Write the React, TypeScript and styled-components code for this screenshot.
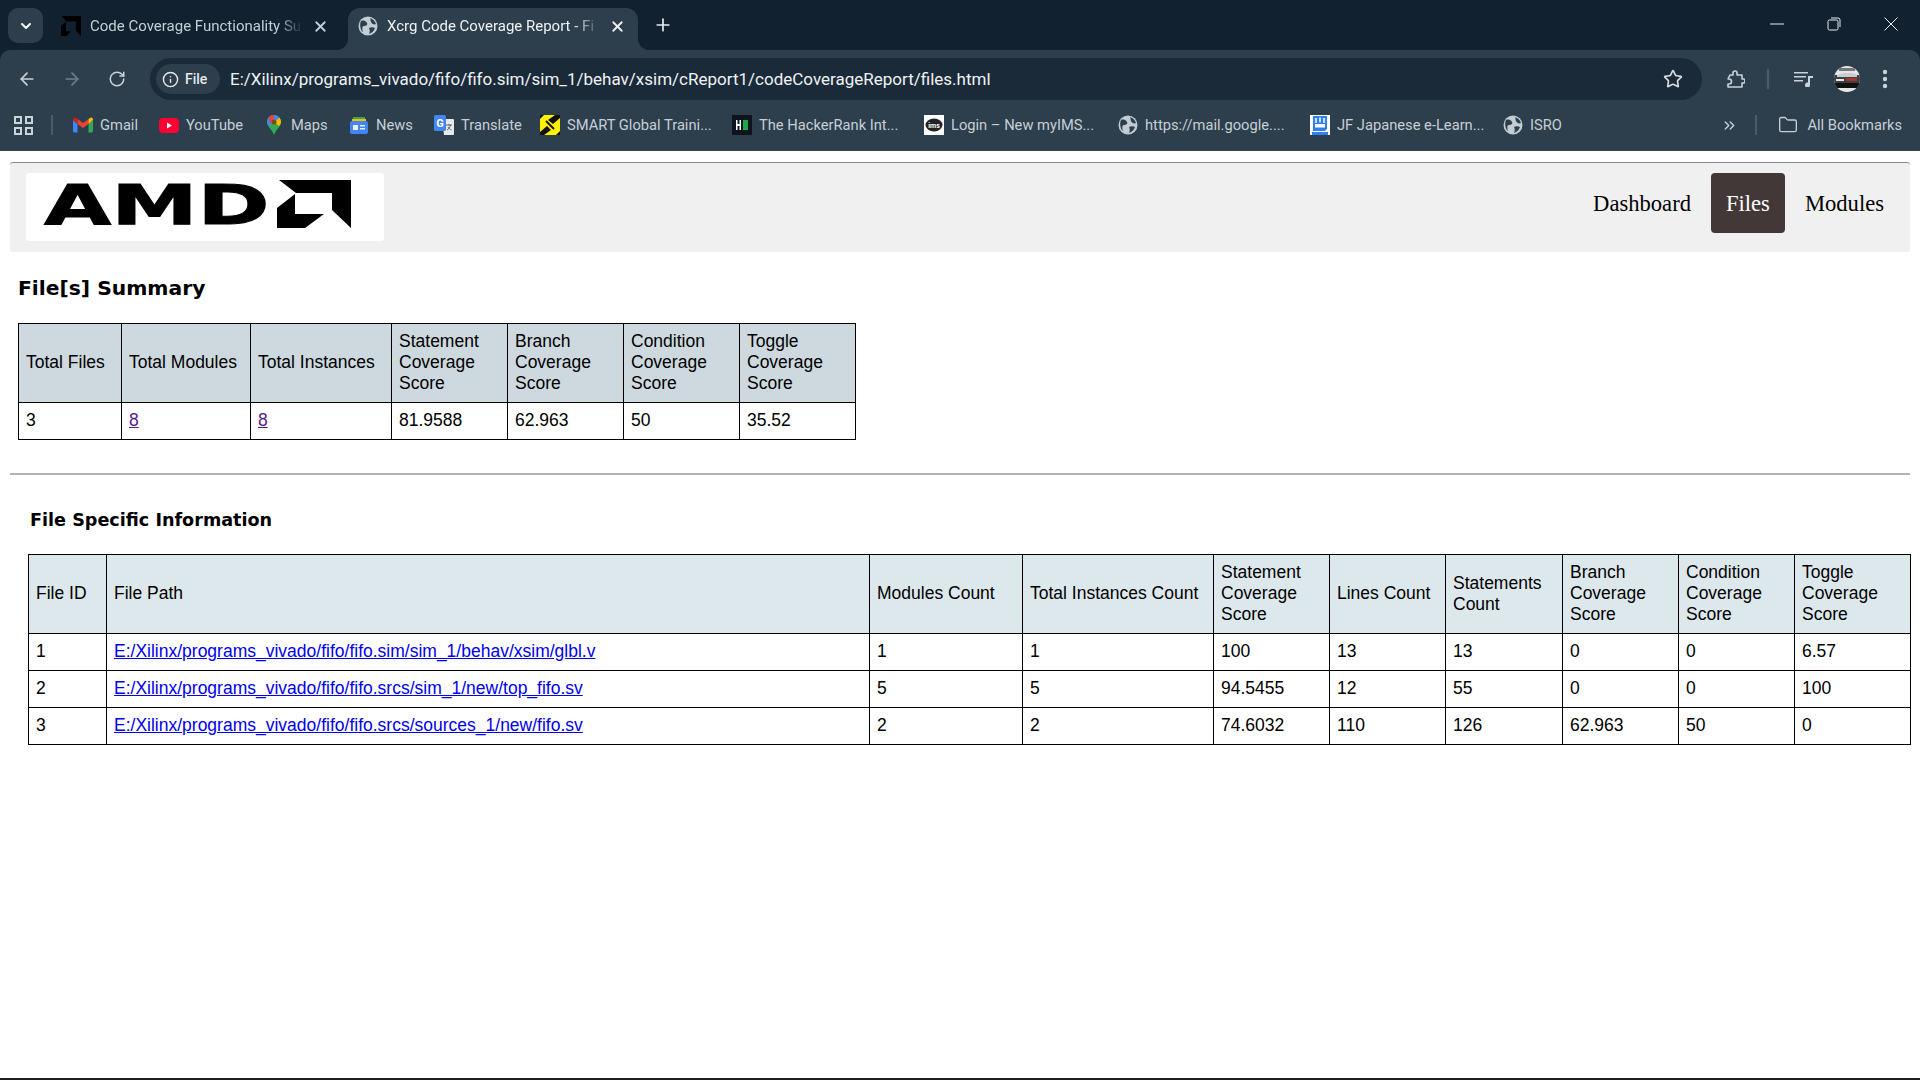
import React from "react";
import styled, { createGlobalStyle } from "styled-components";
import {
  ArrowLeft,
  ArrowRight,
  ChevronDown,
  ChevronsRight,
  Folder,
  Info,
  Plus,
  RotateCw,
  Star,
  X,
} from "lucide-react";

const GlobalStyle = createGlobalStyle`
  html, body {
    margin: 0;
    padding: 0;
    background: #fff;
  }
  * { box-sizing: border-box; }
`;

const STRIP = "#122130";
const TOOL = "#2d3e4c";

const Screen = styled.div`
  width: 1920px;
  height: 1080px;
  overflow: hidden;
  display: flex;
  flex-direction: column;
`;

/* browser chrome */
const Chrome = styled.div`
  background: ${STRIP};
  height: 151px;
  flex: none;
  font-family: Roboto, "Liberation Sans", sans-serif;
  color: #d5dde3;
  border-bottom: 1px solid #3a4650;
`;

const TabStrip = styled.div`
  height: 50px;
  display: flex;
  align-items: flex-end;
  padding-left: 8px;
`;

const TabMenu = styled.div`
  width: 35px;
  height: 35px;
  margin-bottom: 7px;
  border-radius: 10px;
  background: ${TOOL};
  display: flex;
  align-items: center;
  justify-content: center;
  color: #fff;
`;

const Tab = styled.div<{ $active?: boolean }>`
  position: relative;
  width: 290px;
  height: 42px;
  padding: 0 12px 6px 10px;
  margin-left: ${(p) => (p.$active ? "7px" : "8px")};
  display: flex;
  align-items: center;
  gap: 9px;
  border-radius: 12px 12px 0 0;
  background: ${(p) => (p.$active ? TOOL : "transparent")};
  color: ${(p) => (p.$active ? "#eef2f5" : "#c4ced6")};
  font-size: 15px;

  ${(p) =>
    p.$active &&
    `
    &::before, &::after {
      content: "";
      position: absolute;
      bottom: 0;
      width: 12px;
      height: 12px;
    }
    &::before {
      left: -12px;
      background: radial-gradient(circle at 0 0, transparent 12px, ${TOOL} 12.5px);
    }
    &::after {
      right: -12px;
      background: radial-gradient(circle at 100% 0, transparent 12px, ${TOOL} 12.5px);
    }
  `}
`;

const TabTitle = styled.span`
  flex: 1;
  white-space: nowrap;
  -webkit-mask-image: linear-gradient(to right, #000 88%, transparent 100%);
  mask-image: linear-gradient(to right, #000 88%, transparent 100%);
`;

const NewTab = styled.div`
  margin: 0 0 8px 7px;
  width: 35px;
  height: 35px;
  display: flex;
  align-items: center;
  justify-content: center;
  color: #e8edf0;
`;

const WindowControls = styled.div`
  margin: 0 1px 0 auto;
  align-self: flex-start;
  display: flex;
  color: #e8edf0;
`;

const WindowButton = styled.div`
  width: 57px;
  height: 48px;
  display: flex;
  align-items: center;
  justify-content: center;
`;

const Toolbar = styled.div`
  height: 50px;
  background: ${TOOL};
  border-radius: 10px 10px 0 0;
  display: flex;
  align-items: center;
  padding: 8px 0 0 16px;
  color: #c9d3da;
`;

const ToolIcon = styled.div<{ $dim?: boolean; $gap?: number }>`
  width: 22px;
  height: 22px;
  flex: none;
  margin-right: ${(p) => p.$gap ?? 23}px;
  display: flex;
  align-items: center;
  justify-content: center;
  color: ${(p) => (p.$dim ? "#6f7f8c" : "#c9d3da")};
`;

const Omnibox = styled.div`
  width: 1552px;
  height: 42px;
  margin-right: 22px;
  margin-left: -1px;
  border-radius: 21px;
  background: #1a2a38;
  display: flex;
  align-items: center;
  padding: 0 19px 0 6px;
`;

const FileChip = styled.div`
  width: 64px;
  height: 30px;
  border-radius: 15px;
  background: ${TOOL};
  display: flex;
  align-items: center;
  gap: 6px;
  padding-left: 6px;
  font-size: 14px;
  font-weight: 500;
  color: #e4e9ed;
`;

const UrlText = styled.div`
  flex: 1;
  margin-left: 10px;
  font-size: 17px;
  color: #eef2f5;
  white-space: nowrap;
`;

const ToolDivider = styled.div<{ $before?: number; $after?: number }>`
  width: 2px;
  height: 20px;
  margin: 0 ${(p) => p.$after ?? 0}px 0 ${(p) => p.$before ?? 0}px;
  background: #4a5b69;
  flex: none;
`;

const MediaIcon = styled.svg`
  flex: none;
  margin-left: 25px;
`;

const AvatarIcon = styled.svg`
  flex: none;
  margin: 0 22px 0 20px;
`;

const BookmarkBar = styled.div`
  height: 50px;
  background: ${TOOL};
  display: flex;
  align-items: center;
  padding-left: 14px;
  font-size: 14.7px;
  color: #c6d0d8;
`;

const AppsGrid = styled.div`
  width: 19px;
  height: 19px;
  flex: none;
  display: grid;
  grid-template-columns: 8px 8px;
  gap: 3px;
  margin-right: 18px;

  span {
    border: 2px solid #c9d3da;
  }
`;

const Bookmark = styled.div<{ $width: number }>`
  width: ${(p) => p.$width}px;
  flex: none;
  display: flex;
  align-items: center;
  gap: 7px;
  white-space: nowrap;
`;

const BookmarkIcon = styled.div`
  width: 20px;
  height: 20px;
  flex: none;
  display: flex;
  align-items: center;
  justify-content: center;
`;

const BookmarkEnd = styled.div`
  margin-left: auto;
  display: flex;
  align-items: center;
  gap: 9px;
  padding-right: 18px;
`;

/* report page */
const Page = styled.main`
  flex: 1;
  background: #fff;
  color: #000;
  padding: 11px 10px 0;
  font-family: "Liberation Sans", Arial, sans-serif;
  font-size: 17.5px;
`;

const Header = styled.header`
  height: 90px;
  background: #f0f0f0;
  border-top: 1px solid #8c8c8c;
  border-radius: 3px;
  padding: 10px 11px 0 16px;
  display: flex;
  justify-content: space-between;
  align-items: flex-start;
`;

const LogoBox = styled.div`
  width: 358px;
  height: 68px;
  background: #fff;
  border-radius: 3px;
  padding: 6px 0 0 18px;
  display: flex;
  align-items: flex-start;
  overflow: hidden;
`;

const LogoWord = styled.span`
  display: inline-block;
  width: 233px;
  margin-top: -2px;
  font-family: "DejaVu Sans", sans-serif;
  font-weight: 700;
  font-size: 56px;
  line-height: 56px;
  color: #000;
  transform: scaleX(1.55);
  transform-origin: left center;
  -webkit-text-stroke: 1px #000;
`;

const MarkSvg = styled.svg`
  flex: none;
  margin-top: 1px;
`;

const Nav = styled.nav`
  display: flex;
  gap: 5px;
  font-family: "Liberation Serif", "Times New Roman", serif;
  font-size: 22.6px;
`;

const NavItem = styled.a<{ $active?: boolean }>`
  height: 60px;
  padding: 2px 15px 0;
  display: flex;
  align-items: center;
  border-radius: 4px;
  color: ${(p) => (p.$active ? "#fff" : "#000")};
  background: ${(p) => (p.$active ? "#433838" : "transparent")};
`;

const Heading = styled.h1`
  margin: 23px 0 22px 8px;
  font-family: "DejaVu Sans", Verdana, sans-serif;
  font-weight: 700;
  font-size: 20.3px;
  line-height: 26px;
`;

const SubHeading = styled.h2`
  margin: 33px 0 22px 20px;
  font-family: "DejaVu Sans", Verdana, sans-serif;
  font-weight: 700;
  font-size: 17.6px;
  line-height: 24px;
`;

const Table = styled.table<{ $head: string; $left: number; $width: number }>`
  border-collapse: collapse;
  table-layout: fixed;
  width: ${(p) => p.$width}px;
  margin-left: ${(p) => p.$left}px;
  line-height: 21px;

  th,
  td {
    border: 1px solid #000;
    padding: 7px 7px 8px;
    font-weight: 400;
    text-align: left;
    vertical-align: middle;
  }
  th {
    background: ${(p) => p.$head};
  }
`;

const Col = styled.col<{ $width: number }>`
  width: ${(p) => p.$width}px;
`;

const Link = styled.a<{ $visited?: boolean }>`
  color: ${(p) => (p.$visited ? "#551a8b" : "#0000ee")};
  text-decoration: underline;
`;

const Rule = styled.hr`
  margin: 33px 0 0;
  border: none;
  border-top: 2px solid #b4b4b4;
`;

const BottomEdge = styled.div`
  height: 2px;
  flex: none;
  background: #1f1f1f;
`;

const Globe = ({ size = 20 }: { size?: number }) => (
  <svg width={size} height={size} viewBox="0 0 20 20">
    <circle cx="10" cy="10" r="9.5" fill="#c3ccd3" />
    <path d="M3 5c3-1 5 0 6 2s-1 3-3 3-2 3-1 6C3 15 1 9 3 5z" fill="#2d3e4c" />
    <path d="M12 2c3 1 5 3 6 6-2 1-4 0-5-2s0-3-1-4zM11 12c2-1 4-1 6 0-1 3-3 5-6 6 1-2 1-4 0-6z" fill="#2d3e4c" />
  </svg>
);

const GmailIcon = () => (
  <svg width="20" height="16" viewBox="0 0 20 16">
    <path d="M0 3v11a1.5 1.5 0 0 0 1.5 1.5H4.500V7z" fill="#4285f4" />
    <path d="M15.500 7v8.500h3A1.500 1.500 0 0 0 20 14V3z" fill="#34a853" />
    <path d="M0 3l4.500 4V2L2.500.700C1.300 0 0 1 0 3z" fill="#c5221f" />
    <path d="M4.500 2v5L10 11l5.500-4V2L10 6z" fill="#ea4335" />
    <path d="M15.500 2v5L20 3c0-2-1.300-3-2.500-2.300z" fill="#fbbc04" />
  </svg>
);

const YouTubeIcon = () => (
  <svg width="20" height="15" viewBox="0 0 20 15">
    <rect width="20" height="15" rx="4" fill="#ff0033" />
    <path d="M8 4.500l5 3-5 3z" fill="#fff" />
  </svg>
);

const MapsIcon = () => (
  <svg width="14" height="20" viewBox="0 0 14 20">
    <path d="M7 0a7 7 0 0 1 7 7c0 5-5 7-7 13C5 14 0 12 0 7a7 7 0 0 1 7-7z" fill="#34a853" />
    <path d="M7 0a7 7 0 0 1 5.500 2.700L2 11C.8 9.500 0 8.500 0 7a7 7 0 0 1 7-7z" fill="#4285f4" />
    <path d="M1.500 2.500A7 7 0 0 1 7 0v4.500L3 8z" fill="#ea4335" />
    <path d="M12.500 2.700A7 7 0 0 1 14 7c0 1.500-.8 2.500-2 4L7 7z" fill="#fbbc04" />
    <circle cx="7" cy="7" r="2.500" fill="#7b4a12" />
  </svg>
);

const NewsIcon = () => (
  <svg width="18" height="18" viewBox="0 0 18 18">
    <path d="M3 1h12v5H3z" fill="#34a853" />
    <path d="M2 3h14v4H2z" fill="#fbbc04" />
    <rect y="5" width="18" height="13" rx="2" fill="#4285f4" />
    <rect x="3" y="9" width="5" height="5" fill="#e8f0fe" />
    <rect x="10" y="9" width="5" height="1.500" fill="#e8f0fe" />
    <rect x="10" y="12" width="5" height="1.500" fill="#e8f0fe" />
  </svg>
);

const TranslateIcon = () => (
  <svg width="20" height="20" viewBox="0 0 20 20">
    <path d="M8 4h11a1 1 0 0 1 1 1v14a1 1 0 0 1-1 1H10z" fill="#e8eaed" />
    <path d="M12 10h6M15 9v1.500M13 15c2-1 3-3 3.500-5M14 12c1 1.500 2 2.500 3.500 3" stroke="#5f6368" fill="none" />
    <rect width="12" height="16" rx="1.500" fill="#4285f4" />
    <text x="6" y="12" fontSize="11" fontWeight="700" fill="#fff" textAnchor="middle" fontFamily="Roboto, sans-serif">G</text>
  </svg>
);

const SmartIcon = () => (
  <svg width="20" height="20" viewBox="0 0 20 20">
    <rect width="20" height="20" fill="#111" />
    <path d="M0 4l4-4h11L8 5l5 4 7-6v13l-4 4H4l7-5-4-4-7 6z" fill="#fff200" />
    <path d="M6 6l8 8" stroke="#111" strokeWidth="2" />
  </svg>
);

const HackerRankIcon = () => (
  <svg width="20" height="20" viewBox="0 0 20 20">
    <rect width="20" height="20" fill="#0e141e" />
    <path d="M4 5h1.500v4h2V5H9v10H7.500v-4h-2v4H4z" fill="#fff" />
    <rect x="11" y="5" width="5" height="10" fill="#1ba94c" />
  </svg>
);

const ImsIcon = () => (
  <svg width="20" height="20" viewBox="0 0 20 20">
    <rect width="20" height="20" fill="#fff" />
    <ellipse cx="10" cy="10" rx="8.500" ry="6.500" fill="#222" />
    <text x="10" y="12.500" fontSize="7" fontWeight="700" fill="#fff" textAnchor="middle" fontFamily="Roboto, sans-serif">ims</text>
  </svg>
);

const JapaneseIcon = () => (
  <svg width="20" height="20" viewBox="0 0 20 20">
    <rect width="20" height="20" fill="#fff" />
    <path d="M3 1h14v13l-2 2H3z" fill="#2f80ed" />
    <path d="M6 3v5M10 2.500v5M14 3v5" stroke="#fff" strokeWidth="1.500" />
    <rect x="5" y="9" width="10" height="3.500" fill="#fff" />
    <rect x="2" y="17" width="16" height="3" fill="#2f80ed" />
  </svg>
);

const AmdFavicon = () => (
  <svg width="20" height="20" viewBox="0 0 74 74">
    <path d="M2 0h72v74L55 54V20H20z" fill="#000" />
    <path d="M0 36l18-16v36h19L20 74H0z" fill="#000" />
  </svg>
);

const AmdMark = () => (
  <MarkSvg width="74" height="49" viewBox="0 0 74 49">
    <path d="M2 0h72v48L55 30V13H19z" fill="#000" />
    <path d="M0 28l18-14v20h29L28 48H0z" fill="#000" />
  </MarkSvg>
);

const MoreDots = () => (
  <svg width="6" height="20" viewBox="0 0 6 20" fill="currentColor">
    <circle cx="3" cy="3" r="2.200" />
    <circle cx="3" cy="10" r="2.200" />
    <circle cx="3" cy="17" r="2.200" />
  </svg>
);

const Avatar = () => (
  <AvatarIcon width="26" height="26" viewBox="0 0 26 26">
    <clipPath id="avatar-clip">
      <circle cx="13" cy="13" r="13" />
    </clipPath>
    <g clipPath="url(#avatar-clip)">
      <rect width="26" height="26" fill="#e4e6e8" />
      <rect x="5" y="2" width="16" height="3" fill="#777" />
      <path d="M0 9h26v13H0z" fill="#3c3f44" />
      <path d="M3 9l6-2h10l4 2v2H3z" fill="#c9ccd0" />
      <rect x="12" y="12" width="11" height="3" fill="#a8342f" />
      <rect x="2" y="13" width="8" height="2" fill="#e6e6e6" />
      <rect y="17" width="26" height="5" fill="#111" />
    </g>
  </AvatarIcon>
);

const bookmarks = [
  { label: "Gmail", width: 86, icon: <GmailIcon /> },
  { label: "YouTube", width: 105, icon: <YouTubeIcon /> },
  { label: "Maps", width: 85, icon: <MapsIcon /> },
  { label: "News", width: 85, icon: <NewsIcon /> },
  { label: "Translate", width: 106, icon: <TranslateIcon /> },
  { label: "SMART Global Traini...", width: 192, icon: <SmartIcon /> },
  { label: "The HackerRank Int...", width: 192, icon: <HackerRankIcon /> },
  { label: "Login – New myIMS...", width: 194, icon: <ImsIcon /> },
  { label: "https://mail.google....", width: 192, icon: <Globe /> },
  { label: "JF Japanese e-Learn...", width: 193, icon: <JapaneseIcon /> },
  { label: "ISRO", width: 80, icon: <Globe /> },
];

const summaryCols = [103, 129, 141, 116, 116, 116, 116];
const summaryHead = [
  "Total Files",
  "Total Modules",
  "Total Instances",
  "Statement Coverage Score",
  "Branch Coverage Score",
  "Condition Coverage Score",
  "Toggle Coverage Score",
];

const fileCols = [78, 763, 153, 191, 116, 116, 117, 116, 116, 116];
const fileHead = [
  "File ID",
  "File Path",
  "Modules Count",
  "Total Instances Count",
  "Statement Coverage Score",
  "Lines Count",
  "Statements Count",
  "Branch Coverage Score",
  "Condition Coverage Score",
  "Toggle Coverage Score",
];
const fileRows = [
  ["1", "E:/Xilinx/programs_vivado/fifo/fifo.sim/sim_1/behav/xsim/glbl.v", "1", "1", "100", "13", "13", "0", "0", "6.57"],
  ["2", "E:/Xilinx/programs_vivado/fifo/fifo.srcs/sim_1/new/top_fifo.sv", "5", "5", "94.5455", "12", "55", "0", "0", "100"],
  ["3", "E:/Xilinx/programs_vivado/fifo/fifo.srcs/sources_1/new/fifo.sv", "2", "2", "74.6032", "110", "126", "62.963", "50", "0"],
];

const App: React.FC = () => {
  return (
    <Screen>
      <GlobalStyle />
      <Chrome>
        <TabStrip>
          <TabMenu>
            <ChevronDown size={16} strokeWidth={3} />
          </TabMenu>
          <Tab>
            <AmdFavicon />
            <TabTitle>Code Coverage Functionality Su</TabTitle>
            <X size={17} strokeWidth={2.5} />
          </Tab>
          <Tab $active>
            <Globe />
            <TabTitle>Xcrg Code Coverage Report - Fi</TabTitle>
            <X size={17} strokeWidth={2.5} />
          </Tab>
          <NewTab>
            <Plus size={20} />
          </NewTab>
          <WindowControls>
            <WindowButton>
              <svg width="14" height="2" viewBox="0 0 14 2">
                <path d="M0 1h14" stroke="currentColor" />
              </svg>
            </WindowButton>
            <WindowButton>
              <svg width="14" height="14" viewBox="0 0 14 14" fill="none" stroke="currentColor">
                <rect x="1" y="3" width="10" height="10" rx="1.500" />
                <path d="M4 1h7a2 2 0 0 1 2 2v7" />
              </svg>
            </WindowButton>
            <WindowButton>
              <svg width="14" height="14" viewBox="0 0 14 14" stroke="currentColor">
                <path d="M0.500 0.500l13 13M13.500 0.500l-13 13" />
              </svg>
            </WindowButton>
          </WindowControls>
        </TabStrip>
        <Toolbar>
          <ToolIcon>
            <ArrowLeft size={20} />
          </ToolIcon>
          <ToolIcon $dim>
            <ArrowRight size={20} />
          </ToolIcon>
          <ToolIcon>
            <RotateCw size={18} />
          </ToolIcon>
          <Omnibox>
            <FileChip>
              <Info size={17} />
              File
            </FileChip>
            <UrlText>E:/Xilinx/programs_vivado/fifo/fifo.sim/sim_1/behav/xsim/cReport1/codeCoverageReport/files.html</UrlText>
            <Star size={20} color="#d5dde3" />
          </Omnibox>
          <ToolIcon $gap={21}>
            <svg width="20" height="20" viewBox="0 0 20 20" fill="none" stroke="currentColor" strokeWidth="1.600">
              <path d="M5 6h3V4a2 2 0 0 1 4 0v2h5v4h1a2 2 0 0 1 0 4h-1v4H3v-3h1a2.500 2.500 0 0 0 0-5H3z" strokeLinejoin="round" />
            </svg>
          </ToolIcon>
          <ToolDivider />
          <MediaIcon width="20" height="16" viewBox="0 0 20 16" fill="#c9d3da">
            <path d="M0 1h14v1.500H0zM0 5h12v1.500H0zM0 9h9v1.500H0zM14 5h5v2h-3v7a2.500 2.500 0 1 1-2-2.400z" />
          </MediaIcon>
          <Avatar />
          <MoreDots />
        </Toolbar>
        <BookmarkBar>
          <AppsGrid>
            <span />
            <span />
            <span />
            <span />
          </AppsGrid>
          <ToolDivider $after={20} />
          {bookmarks.map((b) => (
            <Bookmark key={b.label} $width={b.width}>
              <BookmarkIcon>{b.icon}</BookmarkIcon>
              {b.label}
            </Bookmark>
          ))}
          <BookmarkEnd>
            <ChevronsRight size={17} />
            <ToolDivider $before={8} $after={12} />
            <Folder size={20} strokeWidth={1.6} />
            All Bookmarks
          </BookmarkEnd>
        </BookmarkBar>
      </Chrome>

      <Page>
        <Header>
          <LogoBox>
            <LogoWord>AMD</LogoWord>
            <AmdMark />
          </LogoBox>
          <Nav>
            <NavItem>Dashboard</NavItem>
            <NavItem $active>Files</NavItem>
            <NavItem>Modules</NavItem>
          </Nav>
        </Header>

        <Heading>File[s] Summary</Heading>
        <Table $head="#cdd9de" $left={8} $width={837}>
          <colgroup>
            {summaryCols.map((w, i) => (
              <Col key={i} $width={w} />
            ))}
          </colgroup>
          <thead>
            <tr>
              {summaryHead.map((h) => (
                <th key={h}>{h}</th>
              ))}
            </tr>
          </thead>
          <tbody>
            <tr>
              <td>3</td>
              <td>
                <Link $visited>8</Link>
              </td>
              <td>
                <Link $visited>8</Link>
              </td>
              <td>81.9588</td>
              <td>62.963</td>
              <td>50</td>
              <td>35.52</td>
            </tr>
          </tbody>
        </Table>

        <Rule />

        <SubHeading>File Specific Information</SubHeading>
        <Table $head="#dde8ec" $left={18} $width={1882}>
          <colgroup>
            {fileCols.map((w, i) => (
              <Col key={i} $width={w} />
            ))}
          </colgroup>
          <thead>
            <tr>
              {fileHead.map((h) => (
                <th key={h}>{h}</th>
              ))}
            </tr>
          </thead>
          <tbody>
            {fileRows.map((row) => (
              <tr key={row[0]}>
                {row.map((cell, i) => (
                  <td key={i}>{i === 1 ? <Link>{cell}</Link> : cell}</td>
                ))}
              </tr>
            ))}
          </tbody>
        </Table>
      </Page>
      <BottomEdge />
    </Screen>
  );
};

export default App;
